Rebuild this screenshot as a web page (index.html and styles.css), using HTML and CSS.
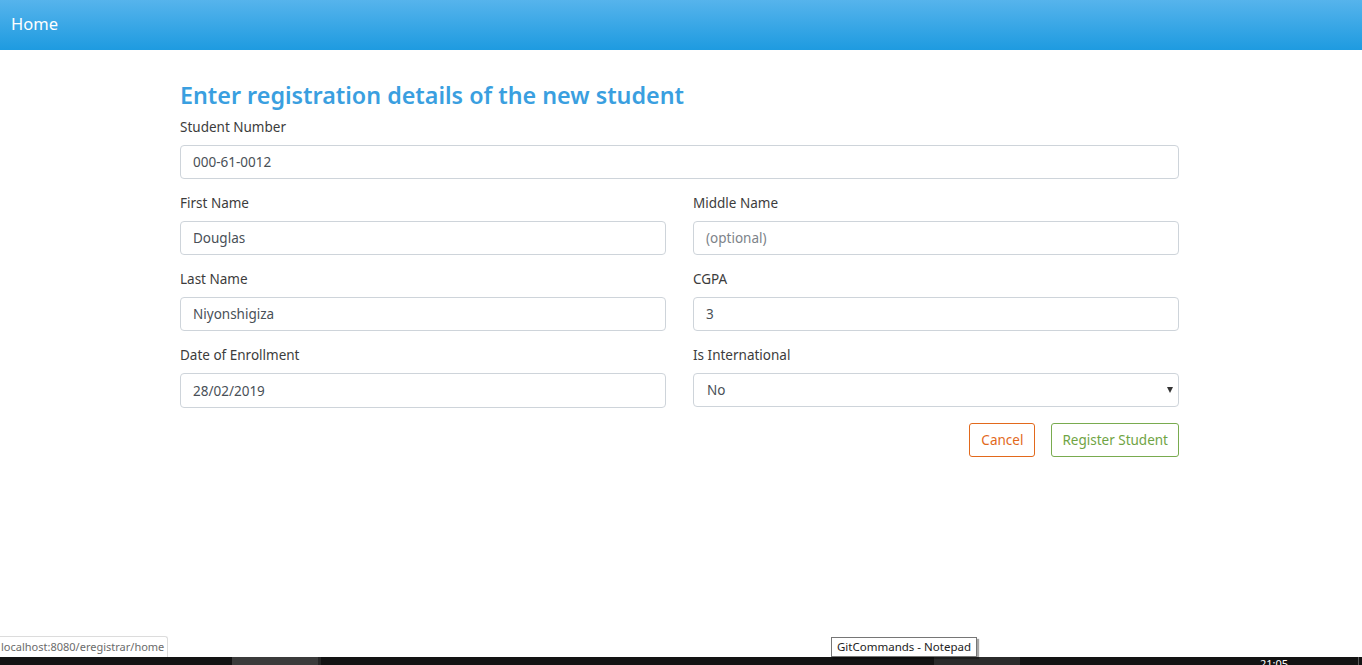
FILE: index.html
```html
<!DOCTYPE html>
<html lang="en">
<head>
<meta charset="utf-8">
<title>Home</title>
<link rel="stylesheet" href="styles.css">
</head>
<body>
<header class="topbar"><span class="brand">Home</span></header>
<main class="page">
  <h3 class="title">Enter registration details of the new student</h3>
  <form class="form">
    <div class="group">
      <label class="label">Student Number</label>
      <input class="control" type="text" value="000-61-0012">
    </div>
    <div class="row">
      <div class="group">
        <label class="label">First Name</label>
        <input class="control" type="text" value="Douglas">
      </div>
      <div class="group">
        <label class="label">Middle Name</label>
        <input class="control" type="text" placeholder="(optional)">
      </div>
    </div>
    <div class="row">
      <div class="group">
        <label class="label">Last Name</label>
        <input class="control" type="text" value="Niyonshigiza">
      </div>
      <div class="group">
        <label class="label">CGPA</label>
        <input class="control" type="text" value="3">
      </div>
    </div>
    <div class="row">
      <div class="group">
        <label class="label">Date of Enrollment</label>
        <input class="control tall" type="text" value="28/02/2019">
      </div>
      <div class="group">
        <label class="label">Is International</label>
        <div class="select-wrap">
          <select class="control select"><option>No</option><option>Yes</option></select>
        </div>
      </div>
    </div>
    <div class="actions">
      <button type="button" class="btn btn-cancel">Cancel</button>
      <button type="button" class="btn btn-register">Register Student</button>
    </div>
  </form>
</main>
<div class="statusbar">localhost:8080/eregistrar/home</div>
<div class="tooltip">GitCommands - Notepad</div>
<div class="taskbar">
  <div class="tb-item tb-a"></div>
  <div class="tb-sep"></div>
  <div class="tb-item tb-b"></div>
  <div class="tb-fill"><span class="clock">21:05</span></div>
  <div class="tb-edge"></div>
</div>
</body>
</html>
```
FILE: styles.css
```css
* { box-sizing: border-box; }
html, body { margin: 0; padding: 0; }
body {
  font-family: "Segoe UI", "Noto Sans", "Open Sans", sans-serif;
  font-size: 14px;
  color: #3c3c3c;
  background: #fff;
  height: 665px;
  overflow: hidden;
  position: relative;
}
.topbar {
  height: 50px;
  background: linear-gradient(#56b4ec, #1e9be0);
  display: flex;
  align-items: center;
  padding-left: 11px;
}
.brand {
  color: #fff;
  font-size: 16.5px;
  line-height: 1;
  margin-top: -1px;
}
.page {
  width: 999px;
  margin: 0 0 0 180px;
  padding-top: 28px;
}
.title {
  margin: 0 0 5px;
  font-size: 23.3px;
  line-height: 34px;
  font-weight: 600;
  color: #3a9fe0;
}
.form { display: flex; flex-direction: column; }
.row {
  display: grid;
  grid-template-columns: 486px 486px;
  column-gap: 27px;
}
.group {
  display: flex;
  flex-direction: column;
  margin-bottom: 14px;
}
.label {
  font-size: 13.5px;
  line-height: 20px;
  margin-bottom: 8px;
  color: #3c3c3c;
}
.control {
  height: 34px;
  border: 1px solid #ced4da;
  border-radius: 4px;
  padding: 0 12px;
  font-family: inherit;
  font-size: 13.5px;
  color: #495057;
  background: #fff;
  width: 100%;
  outline: none;
}
.control.tall { height: 35px; }
.control::placeholder { color: #7d8389; }
.select-wrap { position: relative; }
.select {
  -webkit-appearance: none;
  appearance: none;
  padding-left: 13px;
}
.select-wrap::after {
  content: "";
  position: absolute;
  right: 6px;
  top: 14px;
  border-left: 3.5px solid transparent;
  border-right: 3.5px solid transparent;
  border-top: 6px solid #333;
}
.actions {
  display: flex;
  justify-content: flex-end;
  gap: 16px;
  margin-top: 1px;
}
.btn {
  height: 34px;
  background: #fff;
  border-radius: 3px;
  font-family: inherit;
  font-size: 13.5px;
  padding: 0 11px;
  cursor: pointer;
}
.btn-cancel { border: 1px solid #e2691c; color: #e2691c; }
.btn-register { border: 1px solid #79ab4f; color: #6fa444; padding: 0 10px; }
.statusbar {
  position: absolute;
  left: -1px;
  top: 636px;
  height: 21px;
  width: 169px;
  padding-left: 1px;
  background: #fff;
  border: 1px solid #dcdcdc;
  border-bottom: none;
  border-top-right-radius: 3px;
  font-size: 11px;
  line-height: 20px;
  color: #6b6b6b;
  white-space: nowrap;
  overflow: hidden;
}
.tooltip {
  position: absolute;
  left: 831px;
  top: 637px;
  height: 20px;
  width: 146px;
  background: #fff;
  border: 1px solid #767676;
  box-shadow: 2px 2px 1px rgba(0,0,0,0.35);
  font-size: 11.5px;
  line-height: 18px;
  padding-left: 5px;
  color: #222;
  white-space: nowrap;
  z-index: 2;
}
.taskbar {
  position: absolute;
  left: 0;
  top: 657px;
  width: 1362px;
  height: 8px;
  background: #131313;
  display: flex;
}
.tb-a { margin-left: 232px; width: 86px; background: #3b3b3b; }
.tb-sep { width: 3px; background: #262626; }
.tb-b { margin-left: 613px; width: 86px; background: #2b2b2b; }
.tb-fill { flex: 1; position: relative; overflow: hidden; }
.clock {
  position: absolute;
  left: 240px;
  top: 1px;
  font-size: 11px;
  line-height: 12px;
  color: #fff;
}
.tb-edge { width: 1px; background: #5a5a5a; margin-right: 3px; }
```
